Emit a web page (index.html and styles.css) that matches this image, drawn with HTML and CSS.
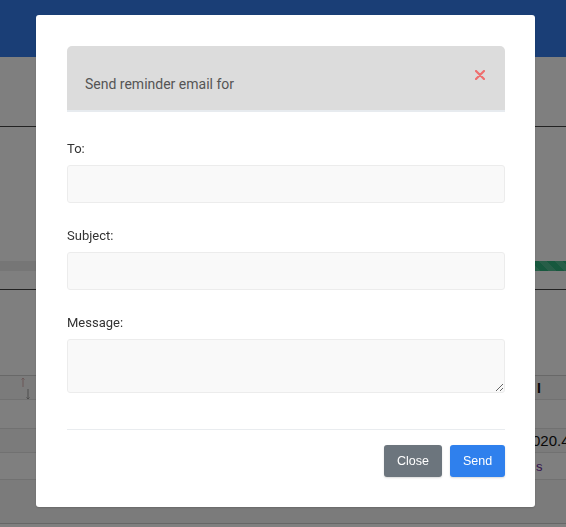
FILE: index.html
```html
<!DOCTYPE html>
<html>
<head>
<meta charset="utf-8">
<link rel="stylesheet" href="styles.css">
</head>
<body>
<div class="page">
  <header class="topbar"></header>
  <div class="band band1"></div>
  <div class="band band2"></div>
  <div class="progress"><div class="fill"></div></div>
  <div class="band band3"></div>
  <div class="band band4"></div>
  <div class="table">
    <div class="row row-head">
      <span class="sort">
        <svg width="14" height="24" viewBox="0 0 14 24"><path d="M5 2v9M3.5 3.5l1.5-1.5 1.5 1.5" stroke="#d6b0b0" stroke-width="1" fill="none"/><path d="M10 13v10M8.5 21.5l1.5 1.5 1.5-1.5" stroke="#9a9a9a" stroke-width="1" fill="none"/></svg>
      </span>
      <span class="cell-right head-txt">I</span>
    </div>
    <div class="row row-a"></div>
    <div class="row row-b"><span class="cell-right num">020.4</span></div>
    <div class="row row-c"><span class="cell-right link">s</span></div>
    <div class="row row-d"></div>
  </div>
</div>

<div class="backdrop">
  <div class="modal">
    <div class="modal-head">
      <span class="modal-title">Send reminder email for</span>
      <span class="close-x">
        <svg width="10" height="10" viewBox="0 0 10 10"><path d="M1 1L9 9M9 1L1 9" stroke="#ef6f6f" stroke-width="2.2" stroke-linecap="round"/></svg>
      </span>
    </div>
    <form class="modal-form">
      <label class="lbl">To:</label>
      <input class="field" type="text">
      <label class="lbl">Subject:</label>
      <input class="field" type="text">
      <label class="lbl">Message:</label>
      <textarea class="field area"></textarea>
    </form>
    <div class="modal-foot">
      <button class="btn btn-close" type="button">Close</button>
      <button class="btn btn-send" type="button">Send</button>
    </div>
  </div>
</div>
</body>
</html>
```

FILE: styles.css
```css
html, body {
  margin: 0;
  padding: 0;
  overflow: hidden;
}
body {
  font-family: Roboto, "Liberation Sans", sans-serif;
  background: #fff;
}
.page {
  width: 566px;
  height: 527px;
  overflow: hidden;
}
.topbar {
  height: 57px;
  background: #347dec;
}
.band { background: #fff; }
.band1 {
  height: 69px;
  border-bottom: 1px solid #444;
}
.band2 { height: 134px; }
.progress {
  height: 10px;
  background: #ececec;
  display: flex;
  justify-content: flex-end;
}
.progress .fill {
  width: 300px;
  background-color: #2fb07c;
  background-image: linear-gradient(45deg, rgba(255,255,255,.15) 25%, transparent 25%, transparent 50%, rgba(255,255,255,.15) 50%, rgba(255,255,255,.15) 75%, transparent 75%, transparent);
  background-size: 16px 16px;
}
.band3 {
  height: 18px;
  border-bottom: 1px solid #444;
}
.band4 { height: 85px; }
.table { border-bottom: 1px solid #ccc; }
.row {
  display: flex;
  align-items: center;
  position: relative;
  border-top: 1px solid #e2e2e2;
  font-family: "Liberation Sans", Arial, sans-serif;
  font-size: 14px;
  color: #111;
}
.row-head { height: 23px; background: #f6f6f6; border-top-color: #d0d0d0; }
.row-a { height: 28px; background: #fff; }
.row-b { height: 23px; background: #f6f6f6; }
.row-c { height: 26px; background: #fff; }
.row-d { height: 43px; background: #f6f6f6; }
.sort {
  margin-left: 18px;
  display: flex;
}
.cell-right {
  position: absolute;
  white-space: nowrap;
}
.head-txt { left: 537px; font-weight: bold; }
.num { left: 532px; font-size: 15px; }
.link { left: 536px; color: #6a2a9a; font-size: 13px; }

.backdrop {
  position: fixed;
  inset: 0;
  background: rgba(0, 0, 0, 0.5);
}
.modal {
  margin: 15px 0 0 36px;
  width: 499px;
  height: 492px;
  box-sizing: border-box;
  background: #fff;
  border-radius: 3px;
  padding: 31px 30px 30px 31px;
  display: flex;
  flex-direction: column;
  box-shadow: 0 1px 2px rgba(0,0,0,.15);
}
.modal-head {
  height: 64px;
  background: #dcdcdc;
  border-radius: 5px 5px 0 0;
  border-bottom: 2px solid #e7ebef;
  display: flex;
  justify-content: space-between;
  align-items: flex-start;
  padding: 0 20px 0 18px;
}
.modal-title {
  margin-top: 28px;
  font-size: 14px;
  line-height: 20px;
  color: #555;
}
.close-x {
  margin-top: 24px;
  display: flex;
}
.modal-form {
  display: flex;
  flex-direction: column;
  margin: 0;
}
.lbl {
  font-size: 13px;
  line-height: 18px;
  color: #333;
  margin-top: 24px;
  margin-bottom: 7px;
}
.lbl:first-child { margin-top: 28px; }
.field {
  display: block;
  box-sizing: border-box;
  width: 100%;
  height: 38px;
  margin: 0;
  background: #f9f9f9;
  border: 1px solid #ececec;
  border-radius: 3px;
  outline: none;
  font-family: Roboto, sans-serif;
}
.area {
  height: 54px;
  resize: vertical;
}
.modal-foot {
  margin-top: 36px;
  border-top: 1px solid #e9ecef;
  padding-top: 15px;
  display: flex;
  justify-content: flex-end;
  gap: 8px;
}
.btn {
  height: 32px;
  border: none;
  border-radius: 3px;
  color: #fff;
  font-family: "Liberation Sans", Arial, sans-serif;
  font-size: 12.5px;
  padding: 0;
  box-shadow: 0 1px 2px rgba(0,0,0,.15);
}
.btn-close { width: 58px; background: #6c757d; }
.btn-send { width: 55px; background: #2f80ed; }
```
